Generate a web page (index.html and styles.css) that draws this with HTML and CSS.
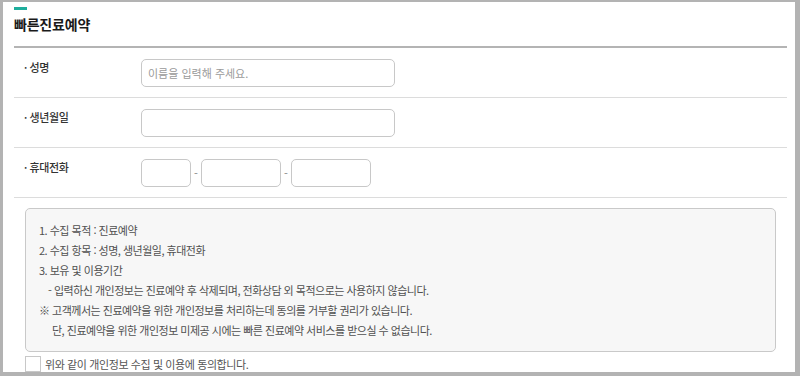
FILE: index.html
```html
<!DOCTYPE html>
<html lang="ko">
<head>
    <meta charset="UTF-8">
    <meta name="viewport" content="width=device-width, initial-scale=1.0">
    <title>빠른진료예약</title>
    <link rel="stylesheet" href="styles.css">
</head>
<body>
    <div class="panel">
        <div class="header">
            <span class="title-mark"></span>
            <h2 class="title">빠른진료예약</h2>
        </div>

        <form class="reserve-form">
            <div class="form-row">
                <label class="form-label" for="userName">· 성명</label>
                <div class="form-field">
                    <input type="text" id="userName" class="text-input wide" placeholder="이름을 입력해 주세요.">
                </div>
            </div>
            <div class="form-row">
                <label class="form-label" for="birth">· 생년월일</label>
                <div class="form-field">
                    <input type="text" id="birth" class="text-input wide">
                </div>
            </div>
            <div class="form-row">
                <label class="form-label" for="phone1">· 휴대전화</label>
                <div class="form-field">
                    <input type="tel" id="phone1" class="text-input phone-first">
                    <span class="dash">-</span>
                    <input type="tel" class="text-input phone-part">
                    <span class="dash">-</span>
                    <input type="tel" class="text-input phone-part">
                </div>
            </div>

            <div class="notice">
                <p>1. 수집 목적 : 진료예약</p>
                <p>2. 수집 항목 : 성명, 생년월일, 휴대전화</p>
                <p>3. 보유 및 이용기간</p>
                <p class="indent-dash">- 입력하신 개인정보는 진료예약 후 삭제되며, 전화상담 외 목적으로는 사용하지 않습니다.</p>
                <p>※ 고객께서는 진료예약을 위한 개인정보를 처리하는데 동의를 거부할 권리가 있습니다.</p>
                <p class="indent">단, 진료예약을 위한 개인정보 미제공 시에는 빠른 진료예약 서비스를 받으실 수 없습니다.</p>
            </div>

            <label class="agree">
                <span class="check-box"></span>
                <span>위와 같이 개인정보 수집 및 이용에 동의합니다.</span>
            </label>
        </form>
    </div>
</body>
</html>
```

FILE: styles.css
```css
body {
    margin: 0;
    padding: 0;
    background-color: #b3b3b3;
    font-family: "Noto Sans CJK KR", "Noto Sans", sans-serif;
    color: #333;
}

.panel {
    margin: 2px 5px 0 3px;
    height: 370px;
    overflow: hidden;
    background-color: white;
    padding: 5px 8px 0 11px;
    box-sizing: border-box;
}

.header {
    border-bottom: 2px solid #b4b4b4;
    padding-bottom: 8px;
}

.title-mark {
    display: block;
    width: 13px;
    height: 3px;
    background-color: #1fae9d;
}

.title {
    margin: 0;
    font-size: 14px;
    line-height: 28px;
    font-weight: bold;
    letter-spacing: -0.2px;
    color: #1a1a1a;
}

.form-row {
    display: grid;
    grid-template-columns: 127px 1fr;
    padding: 11px 0 10px;
    border-bottom: 1px solid #dcdcdc;
}

.form-label {
    padding-left: 10px;
    font-size: 11px;
    line-height: 16px;
    font-weight: 500;
    letter-spacing: -0.4px;
    color: #333;
}

.form-field {
    display: flex;
    align-items: center;
}

.text-input {
    height: 28px;
    box-sizing: border-box;
    border: 1px solid #c8c8c8;
    border-radius: 5px;
    padding: 0 6px;
    font-family: inherit;
    font-size: 11px;
    outline: none;
    background-color: white;
}

.text-input::placeholder {
    color: #9a9a9a;
}

.wide {
    width: 254px;
}

.phone-first {
    width: 50px;
}

.phone-part {
    width: 80px;
}

.dash {
    width: 10px;
    text-align: center;
    font-size: 11px;
    color: #888;
}

.notice {
    margin: 10px 11px 0 11px;
    padding: 11px 13px;
    background-color: #f7f7f7;
    border: 1px solid #c9c9c9;
    border-radius: 5px;
}

.notice p {
    margin: 0;
    font-size: 11px;
    line-height: 20px;
    letter-spacing: -0.5px;
    color: #505050;
}

.notice .indent-dash {
    padding-left: 9px;
}

.notice .indent {
    padding-left: 13px;
}

.agree {
    display: flex;
    align-items: center;
    gap: 4px;
    margin: 4px 0 0 11px;
    font-size: 11px;
    letter-spacing: -0.4px;
    color: #555;
}

.check-box {
    width: 14px;
    height: 14px;
    border: 1px solid #c8c8c8;
    background-color: white;
}
```
